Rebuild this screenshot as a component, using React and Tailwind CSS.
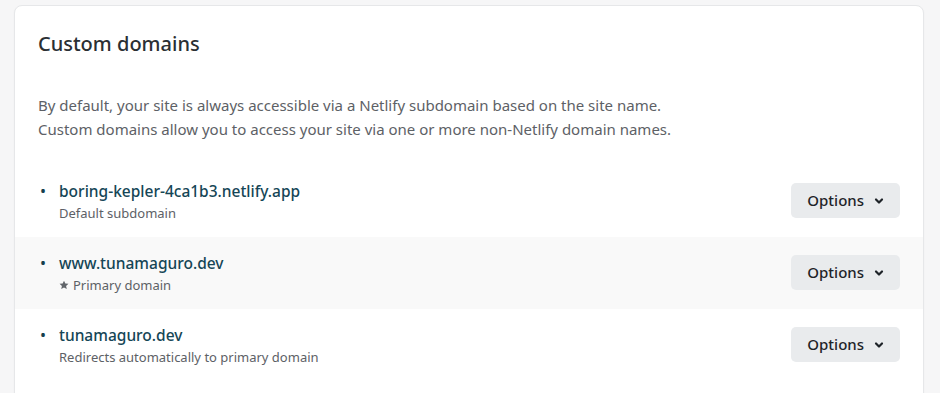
import React from 'react';

const domains = [
  { name: 'boring-kepler-4ca1b3.netlify.app', note: 'Default subdomain' },
  { name: 'www.tunamaguro.dev', note: 'Primary domain', primary: true },
  { name: 'tunamaguro.dev', note: 'Redirects automatically to primary domain' },
];

// Row with a domain link, note and an options button
function DomainRow({ domain, shaded }) {
  return (
    <li className={`flex items-center justify-between h-[72px] pl-[24px] pr-[23px] ${shaded ? 'bg-[#f9f9f9]' : ''}`}>
      <div className="flex items-start">
        <span className="w-[20px] pl-[1px] text-[#163f4d] text-[16px] leading-[24px]">•</span>
        <div className="flex flex-col">
          <a href="#" className="text-[15.5px] leading-[24px] text-[#154656] font-medium">{domain.name}</a>
          <span className="flex items-center gap-[4px] text-[13px] leading-[20px] text-[#5d6166]">
            {domain.primary && (
              <svg className="w-[10px] h-[10px]" viewBox="0 0 24 24" fill="#62666b">
                <path d="M12 1.5l3.2 7 7.5.7-5.7 5 1.7 7.4L12 17.8l-6.7 3.8 1.7-7.4-5.7-5 7.5-.7z" />
              </svg>
            )}
            {domain.note}
          </span>
        </div>
      </div>
      <button className="flex items-center gap-[10px] h-[35px] mt-[-1px] px-[16px] rounded-[5px] bg-[#e9ebed] text-[15px] text-[#1e2328] font-medium">
        Options
        <svg className="w-[10px] h-[10px]" viewBox="0 0 10 10" fill="none" stroke="#1e2328" strokeWidth="2.2" strokeLinecap="round" strokeLinejoin="round">
          <path d="M2 3.5l3 3 3-3" />
        </svg>
      </button>
    </li>
  );
}

export default function App() {
  return (
    <div className="min-h-[393px] bg-[#f6f6f7] pt-[5px] pl-[14px] pr-[16px]" style={{ fontFamily: '"Noto Sans", "Open Sans", sans-serif' }}>
      <section className="w-[910px] bg-white border border-[#e6e7e9] rounded-[8px] shadow-[0_1px_2px_rgba(0,0,0,0.04)] overflow-hidden">
        <h2 className="pt-[24px] px-[23px] text-[20px] leading-[28px] text-[#2b2f33] font-medium">Custom domains</h2>
        <p className="mt-[35px] px-[23px] text-[15px] leading-[24px] text-[#5d6166]">
          By default, your site is always accessible via a Netlify subdomain based on the site name.
          <br />
          Custom domains allow you to access your site via one or more non-Netlify domain names.
        </p>
        <ul className="mt-[24px] pb-[20px]">
          {domains.map((d, i) => (
            <DomainRow key={d.name} domain={d} shaded={i === 1} />
          ))}
        </ul>
      </section>
    </div>
  );
}
